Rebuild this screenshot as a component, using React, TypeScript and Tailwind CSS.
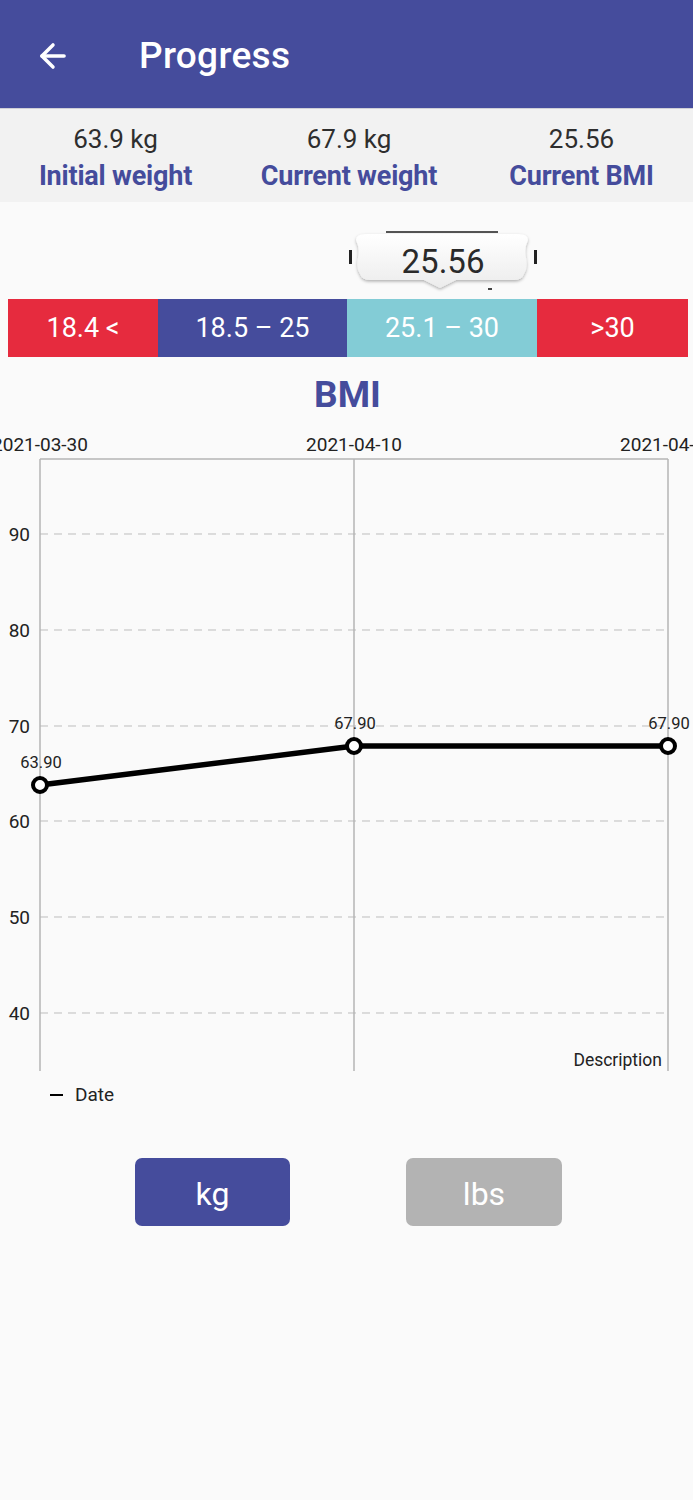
import { ArrowLeft } from 'lucide-react';

const stats = [
  { value: '63.9 kg', label: 'Initial weight' },
  { value: '67.9 kg', label: 'Current weight' },
  { value: '25.56', label: 'Current BMI' },
];

const ranges = [
  { label: '18.4 <', cls: 'w-[150px] bg-[#e62b3e]' },
  { label: '18.5 – 25', cls: 'w-[189px] bg-[#454c9c]' },
  { label: '25.1 – 30', cls: 'w-[190px] bg-[#83ccd6]' },
  { label: '>30', cls: 'flex-1 bg-[#e62b3e]' },
];

// chart geometry, svg starts at page y=420
const yTicks = [
  { v: 90, y: 114 },
  { v: 80, y: 210 },
  { v: 70, y: 306 },
  { v: 60, y: 401 },
  { v: 50, y: 497 },
  { v: 40, y: 593 },
];

const points = [
  { x: 40, y: 365, label: '63.90', lx: 41, ly: 348 },
  { x: 354, y: 326, label: '67.90', lx: 355, ly: 309 },
  { x: 668, y: 326, label: '67.90', lx: 669, ly: 309 },
];

function BmiMarker() {
  return (
    <div className="absolute left-[346px] top-[228px] w-[196px] h-[64px]">
      <svg width="196" height="64" viewBox="0 0 196 64">
        <defs>
          <linearGradient id="bub" x1="0" y1="0" x2="0" y2="1">
            <stop offset="0" stopColor="#ffffff" />
            <stop offset="1" stopColor="#ececec" />
          </linearGradient>
          <filter id="sh" x="-10%" y="-20%" width="120%" height="150%">
            <feDropShadow dx="0" dy="1.5" stdDeviation="1.5" floodColor="#000" floodOpacity="0.3" />
          </filter>
        </defs>
        <line x1="40" y1="4" x2="152" y2="4" stroke="#555" strokeWidth="2" />
        <path
          d="M10 12 Q10 6 20 6 L172 6 Q182 6 182 12 Q178 20 180 30 Q182 40 178 46 Q176 52 168 52 L110 52 L94 60 L78 52 L24 52 Q16 52 14 46 Q10 40 12 30 Q14 20 10 12 Z"
          fill="url(#bub)"
          filter="url(#sh)"
        />
        <rect x="3" y="22" width="3" height="14" fill="#222" />
        <rect x="188" y="22" width="3" height="14" fill="#222" />
        <rect x="142" y="60" width="4" height="2" fill="#444" />
      </svg>
      <span className="absolute inset-x-0 top-[15px] text-center text-[33px] leading-[38px] text-[#2a2a2a] pr-[2px]">
        25.56
      </span>
    </div>
  );
}

function WeightChart() {
  return (
    <svg width="693" height="660" viewBox="0 0 693 660" className="block">
      {yTicks.map((t) => (
        <g key={t.v}>
          <line x1="40" y1={t.y} x2="668" y2={t.y} stroke="#bdbdbd" strokeWidth="1" strokeDasharray="8 6" />
          <text x="30" y={t.y + 7} textAnchor="end" fontSize="19" fill="#222">
            {t.v}
          </text>
        </g>
      ))}
      <line x1="40" y1="39" x2="668" y2="39" stroke="#b5b5b5" strokeWidth="1.5" />
      {[40, 354, 668].map((x) => (
        <line key={x} x1={x} y1="39" x2={x} y2="651" stroke="#b5b5b5" strokeWidth="1.5" />
      ))}
      <text x="40" y="31" textAnchor="middle" fontSize="19" fill="#222">2021-03-30</text>
      <text x="354" y="31" textAnchor="middle" fontSize="19" fill="#222">2021-04-10</text>
      <text x="668" y="31" textAnchor="middle" fontSize="19" fill="#222">2021-04-10</text>
      <polyline
        points={points.map((p) => `${p.x},${p.y}`).join(' ')}
        fill="none"
        stroke="#000"
        strokeWidth="5.5"
      />
      {points.map((p, i) => (
        <g key={i}>
          <circle cx={p.x} cy={p.y} r="7" fill="#fff" stroke="#000" strokeWidth="4" />
          <text x={p.lx} y={p.ly} textAnchor="middle" fontSize="16.5" fill="#222">
            {p.label}
          </text>
        </g>
      ))}
      <text x="662" y="646" textAnchor="end" fontSize="17.5" fill="#222">Description</text>
    </svg>
  );
}

export default function App() {
  return (
    <div className="relative w-[693px] min-h-[1500px] bg-[#fafafa] font-['Roboto',sans-serif] overflow-hidden">
      <header className="h-[109px] bg-[#454c9c] flex items-center pt-[4px] border-b border-[#cfcfd6]">
        <ArrowLeft className="ml-[34px] w-[38px] h-[38px] text-white" strokeWidth={2.2} />
        <h1 className="ml-[67px] text-[37px] font-medium text-white tracking-[0.3px]">Progress</h1>
      </header>

      <div className="h-[93px] bg-[#f2f2f2] grid grid-cols-[233px_233px_227px] pt-[12px] pl-[-2px]">
        {stats.map((s, i) => (
          <div key={s.label} className={`flex flex-col items-center ${i === 2 ? 'w-[233px] -ml-[1px]' : i === 0 ? '-ml-[2px]' : 'ml-[-1px]'}`}>
            <span className="text-[26px] leading-[37px] text-[#2e2e2e]">{s.value}</span>
            <span className="text-[27px] leading-[37px] font-bold text-[#454c9c] tracking-[-0.2px] whitespace-nowrap">{s.label}</span>
          </div>
        ))}
      </div>

      <div className="h-[97px]" />
      <BmiMarker />

      <div className="ml-[8px] mr-[5px] h-[58px] flex">
        {ranges.map((r) => (
          <div key={r.label} className={`${r.cls} flex items-center justify-center text-white text-[27px]`}>
            {r.label}
          </div>
        ))}
      </div>

      <h2 className="h-[63px] flex items-center justify-center pl-[2px] pt-[12px] text-[37px] font-bold text-[#454c9c]">BMI</h2>

      <WeightChart />

      <div className="h-[30px] flex items-center pl-[50px] gap-[12px]">
        <span className="w-[13px] h-[2.5px] bg-black" />
        <span className="text-[19px] text-[#222]">Date</span>
      </div>

      <div className="mt-[48px] flex">
        <button className="ml-[135px] w-[155px] h-[68px] rounded-[7px] bg-[#454c9c] text-white text-[32px] pt-[4px] flex items-center justify-center">
          kg
        </button>
        <button className="ml-[116px] w-[156px] h-[68px] rounded-[7px] bg-[#b3b3b3] text-white text-[32px] pt-[4px] flex items-center justify-center">
          lbs
        </button>
      </div>
    </div>
  );
}
